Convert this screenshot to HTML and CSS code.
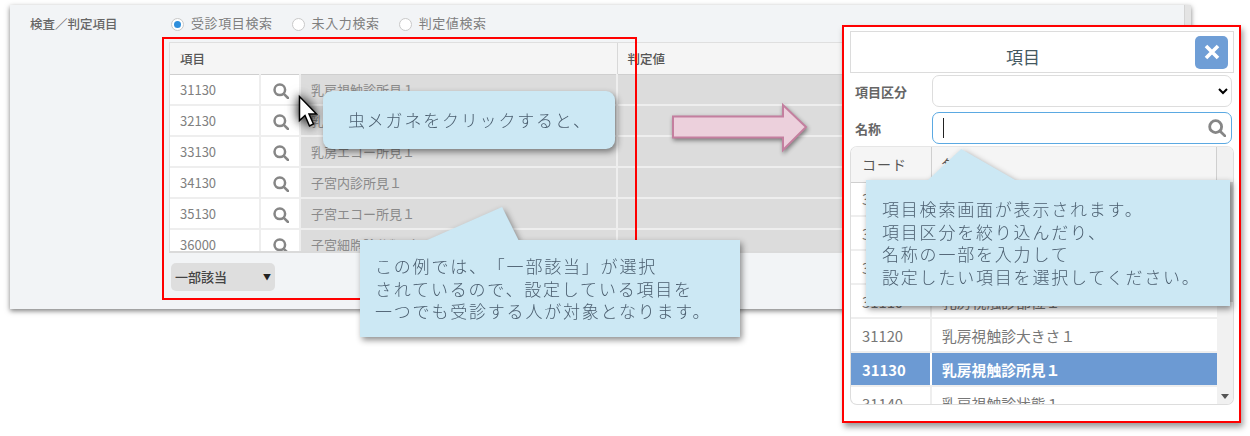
FILE: index.html
```html
<!DOCTYPE html>
<html lang="ja">
<head>
<meta charset="utf-8">
<title>検査／判定項目</title>
<link rel="stylesheet" href="styles.css">
</head>
<body>
<div class="stage">
  <section class="panel">
    <div class="panel-main">
      <div class="search-row">
        <div class="section-label">検査／判定項目</div>
        <div class="radios">
          <span class="radio on"></span><span class="radio-text">受診項目検索</span>
          <span class="radio"></span><span class="radio-text">未入力検索</span>
          <span class="radio"></span><span class="radio-text">判定値検索</span>
        </div>
      </div>
      <div class="item-area">
        <div class="item-table-wrap">
          <table class="item-table">
            <colgroup><col class="c-code"><col class="c-icon"><col class="c-name"><col></colgroup>
            <thead><tr><th colspan="3">項目</th><th>判定値</th></tr></thead>
            <tbody>
              <tr><td>31130</td><td class="icon-cell"><svg class="lens" viewBox="0 0 16 16"><circle cx="6.800" cy="6.800" r="5.300"/><path d="M10.800 10.800 15 15"/></svg></td><td class="gray">乳房視触診所見１</td><td class="gray"></td></tr>
              <tr><td>32130</td><td class="icon-cell"><svg class="lens" viewBox="0 0 16 16"><circle cx="6.800" cy="6.800" r="5.300"/><path d="M10.800 10.800 15 15"/></svg></td><td class="gray">乳房視触診所見１</td><td class="gray"></td></tr>
              <tr><td>33130</td><td class="icon-cell"><svg class="lens" viewBox="0 0 16 16"><circle cx="6.800" cy="6.800" r="5.300"/><path d="M10.800 10.800 15 15"/></svg></td><td class="gray">乳房エコー所見１</td><td class="gray"></td></tr>
              <tr><td>34130</td><td class="icon-cell"><svg class="lens" viewBox="0 0 16 16"><circle cx="6.800" cy="6.800" r="5.300"/><path d="M10.800 10.800 15 15"/></svg></td><td class="gray">子宮内診所見１</td><td class="gray"></td></tr>
              <tr><td>35130</td><td class="icon-cell"><svg class="lens" viewBox="0 0 16 16"><circle cx="6.800" cy="6.800" r="5.300"/><path d="M10.800 10.800 15 15"/></svg></td><td class="gray">子宮エコー所見１</td><td class="gray"></td></tr>
              <tr><td>36000</td><td class="icon-cell"><svg class="lens" viewBox="0 0 16 16"><circle cx="6.800" cy="6.800" r="5.300"/><path d="M10.800 10.800 15 15"/></svg></td><td class="gray">子宮細胞診分類（ベセスダ）</td><td class="gray"></td></tr>
            </tbody>
          </table>
        </div>
        <div class="match-select"><span>一部該当</span><span class="match-arrow">▼</span></div>
      </div>
    </div>
    <div class="panel-scroll"></div>
  </section>

  <div class="red-box"></div>

  <svg class="big-arrow" viewBox="0 0 140 52" width="140" height="52">
    <path d="M1 12.500H111V1L134 23 111 46V33.500H1Z"/>
  </svg>

  <svg class="cursor" viewBox="0 0 20 34" width="20" height="34">
    <path d="M1.500 1.500V25.500L7 20.500 11.500 31 15.500 29 11 19H18.500Z"/>
  </svg>

  <div class="callout callout-click"><p>虫メガネをクリックすると、</p></div>
  <div class="callout callout-example">
    <p>この例では、「一部該当」が選択<br>されているので、設定している項目を<br>一つでも受診する人が対象となります。</p>
  </div>

  <aside class="window">
    <header class="win-head">
      <h2 class="win-title">項目</h2>
      <button class="win-close" type="button"><svg viewBox="0 0 16 16" width="16" height="16"><path d="M2 2 14 14M14 2 2 14"/></svg></button>
    </header>
    <div class="form-row">
      <label class="form-label">項目区分</label>
      <select class="form-select"><option></option></select>
    </div>
    <div class="form-row form-row-name">
      <label class="form-label">名称</label>
      <div class="form-input"><span class="caret"></span><svg class="lens lens-input" viewBox="0 0 16 16"><circle cx="6.800" cy="6.800" r="5.300"/><path d="M10.800 10.800 15 15"/></svg></div>
    </div>
    <div class="result">
      <div class="result-body">
        <table class="result-table">
          <colgroup><col class="r-code"><col></colgroup>
          <thead><tr><th>コード</th><th>名称</th></tr></thead>
          <tbody>
            <tr><td>31080</td><td>乳房視触診１</td></tr>
            <tr><td>31090</td><td>乳房視触診２</td></tr>
            <tr><td>31100</td><td>乳房視触診３</td></tr>
            <tr><td>31110</td><td>乳房視触診部位１</td></tr>
            <tr><td>31120</td><td>乳房視触診大きさ１</td></tr>
            <tr class="selected"><td>31130</td><td>乳房視触診所見１</td></tr>
            <tr><td>31140</td><td>乳房視触診状態１</td></tr>
          </tbody>
        </table>
      </div>
      <div class="result-scroll"><span class="thumb"></span><span class="scroll-down"></span></div>
    </div>
  </aside>

  <div class="callout callout-window">
    <p>項目検索画面が表示されます。<br>項目区分を絞り込んだり、<br>名称の一部を入力して<br>設定したい項目を選択してください。</p>
  </div>
</div>
</body>
</html>
```

FILE: styles.css
```css
* { box-sizing: border-box; }
html, body { margin: 0; padding: 0; background: #fff; }
body { font-family: "Noto Sans CJK JP", "Noto Sans", sans-serif; color: #666; overflow: hidden; text-spacing-trim: space-all; font-feature-settings: "palt" 0; }
.stage { position: relative; width: 1250px; height: 436px; overflow: hidden; padding: 5px 0 0 10px; }

/* left panel */
.panel { display: flex; width: 1181px; height: 304px; background: #f2f4f6; box-shadow: 0 2px 5px rgba(0,0,0,.5); }
.panel-main { flex: 1; min-width: 0; padding: 9px 0 0 20px; }
.panel-scroll { width: 7px; background: #e4e4e4; border-left: 1px solid #d4d4d4; }
.search-row { display: flex; align-items: center; height: 20px; }
.section-label { width: 141px; font-size: 12.500px; font-weight: 500; color: #666; line-height: 20px; white-space: nowrap; }
.radios { display: flex; align-items: center; font-size: 13px; line-height: 18px; letter-spacing: .6px; color: #7f7f7f; }
.radio { width: 13px; height: 13px; border-radius: 50%; background: #fff; border: 1px solid #c9c9c9; display: flex; align-items: center; justify-content: center; }
.radio.on::after { content: ""; width: 7px; height: 7px; border-radius: 50%; background: #2f8fdc; }
.radio-text { margin: 0 19px 0 7px; position: relative; top: -1px; }
.item-area { margin: 8px 0 0 139px; }
.item-table-wrap { height: 211px; overflow: hidden; border: 1px solid #dfdfdf; border-right: 0; border-bottom: 2px solid #dadada; background: #fff; }
.item-table { width: 100%; table-layout: fixed; border-collapse: collapse; font-size: 13px; }
.c-code { width: 90px; }
.c-icon { width: 40px; }
.c-name { width: 317px; }
.item-table th { height: 31px; padding: 0 10px; text-align: left; font-weight: 500; font-size: 12.500px; color: #555; background: #f5f5f5; border-bottom: 1px solid #cfcfcf; border-right: 1px solid #d8d8d8; }
.item-table td { height: 31px; padding: 0 10px; border-bottom: 2px solid #eeeeee; border-right: 2px solid #eeeeee; color: #808080; white-space: nowrap; overflow: hidden; }
.item-table td.gray { background: #dcdcdc; color: #8a8a8a; }
.icon-cell { text-align: center; }
.item-table td.icon-cell { padding: 0 0 0 1px; }
.lens { width: 16px; height: 16px; fill: none; stroke: #868686; stroke-width: 2.500; stroke-linecap: round; vertical-align: middle; }
.match-select { display: flex; justify-content: space-between; align-items: center; width: 104px; height: 28px; margin: 10px 0 0 2px; padding: 0 4px 0 4px; background: #dedede; border-radius: 5px; font-size: 13px; font-weight: 500; color: #444; line-height: 26px; }
.match-arrow { font-size: 8px; color: #222; margin-bottom: 1px; }

/* overlays */
.red-box { position: absolute; left: 162px; top: 37px; width: 475px; height: 263px; border: 2px solid #f00; }
.big-arrow { position: absolute; left: 672px; top: 104px; overflow: visible; fill: #ecd0dc; stroke: #c47f9f; stroke-width: 2; filter: drop-shadow(1px 2px 2px rgba(0,0,0,.45)); }
.cursor { position: absolute; left: 298px; top: 95px; overflow: visible; fill: #fff; stroke: #000; stroke-width: 1.500; stroke-linejoin: miter; filter: drop-shadow(0 0 6px rgba(0,0,0,.75)) drop-shadow(0 0 3px rgba(0,0,0,.4)); }
.callout { position: absolute; background: #cce8f4; color: #4a5d6e; font-size: 17px; line-height: 22.600px; letter-spacing: 1.800px; font-weight: 300; filter: drop-shadow(2px 3px 3px rgba(0,0,0,.45)); white-space: nowrap; }
.callout p { margin: 0; position: relative; }
.callout-click { left: 323px; top: 91px; width: 292px; height: 58px; border-radius: 9px; padding: 18px 0 0 25px; }
.callout-example { left: 360px; top: 240px; width: 380px; height: 97px; padding: 15px 0 0 15px; }
.callout-example::before { content: ""; position: absolute; left: 65px; top: -33px; width: 94px; height: 34px; background: #cce8f4; clip-path: polygon(0 100%, 82% 0, 100% 100%); }
.callout-window { left: 866px; top: 180px; width: 364px; height: 126px; padding: 18px 0 0 16px; }
.callout-window::before { content: ""; position: absolute; left: 61px; top: -31px; width: 90px; height: 32px; background: #cce8f4; clip-path: polygon(0 100%, 38% 0, 100% 100%); }

/* right window */
.window { position: absolute; left: 842px; top: 25px; width: 399px; height: 398px; padding: 4px 5px 0 6px; background: #fff; border: 2px solid #f00; box-shadow: 2px 4px 6px rgba(0,0,0,.4); }
.win-head { display: flex; align-items: center; height: 42px; padding: 0 5px 0 0; border: 1px solid #dcdcdc; }
.win-title { flex: 1; margin: 9px 0 0; font-size: 17px; line-height: 24px; font-weight: 400; text-align: center; color: #44585f; }
.win-close { display: flex; align-items: center; justify-content: center; width: 33px; height: 33px; padding: 0; border: 0; border-radius: 5px; background: #6f9ed6; }
.win-close svg { fill: none; stroke: #fff; stroke-width: 3.600; }
.form-row { display: flex; align-items: center; height: 32px; margin-top: 2px; padding-left: 5px; }
.form-row-name { margin-top: 5px; }
.form-label { width: 77px; font-size: 13px; font-weight: 700; color: #666; }
.form-select { width: 300px; height: 32px; background: #fff; border: 1px solid #dddddd; border-radius: 7px; color: #000; font-size: 14px; }
.form-input { display: flex; align-items: center; justify-content: space-between; width: 300px; height: 32px; padding: 0 5px 0 10px; border: 1px solid #5ba9e2; border-radius: 7px; background: #fff; }
.caret { width: 1px; height: 20px; background: #222; }
.lens-input { width: 18px; height: 18px; }
.result { display: flex; height: 259px; margin-top: 2px; border: 1px solid #dddddd; border-top-color: #e6e6e6; border-radius: 7px; overflow: hidden; }
.result-body { flex: 1; min-width: 0; overflow: hidden; }
.result-table { width: 100%; table-layout: fixed; border-collapse: collapse; font-size: 14.800px; }
.r-code { width: 80px; }
.result-table th { height: 35px; padding: 0 11px; text-align: left; font-weight: 400; font-size: 14px; letter-spacing: 1px; color: #555; background: #f5f5f5; border-right: 1px solid #cfcfcf; border-bottom: 1px solid #cfcfcf; }
.result-table th:last-child { padding-left: 10px; }
.result-table td { height: 34px; padding: 0 10px 0 11px; color: #777; border-bottom: 2px solid #eeeeee; border-right: 2px solid #eeeeee; white-space: nowrap; }
.result-table td:last-child { padding-left: 10px; border-right: 0; }
.result-table tr.selected td { background: #6c9ad3; color: #fff; font-weight: 700; }
.result-table tr.selected td:first-child { border-right-color: #fff; }
.result-scroll { display: flex; flex-direction: column; justify-content: space-between; align-items: center; width: 16px; background: #f1f1f1; }
.thumb { width: 100%; height: 120px; margin-top: 35px; background: #cdcdcd; }
.scroll-down { width: 0; height: 0; margin-bottom: 5px; border-left: 4px solid transparent; border-right: 4px solid transparent; border-top: 5px solid #555; }
```
